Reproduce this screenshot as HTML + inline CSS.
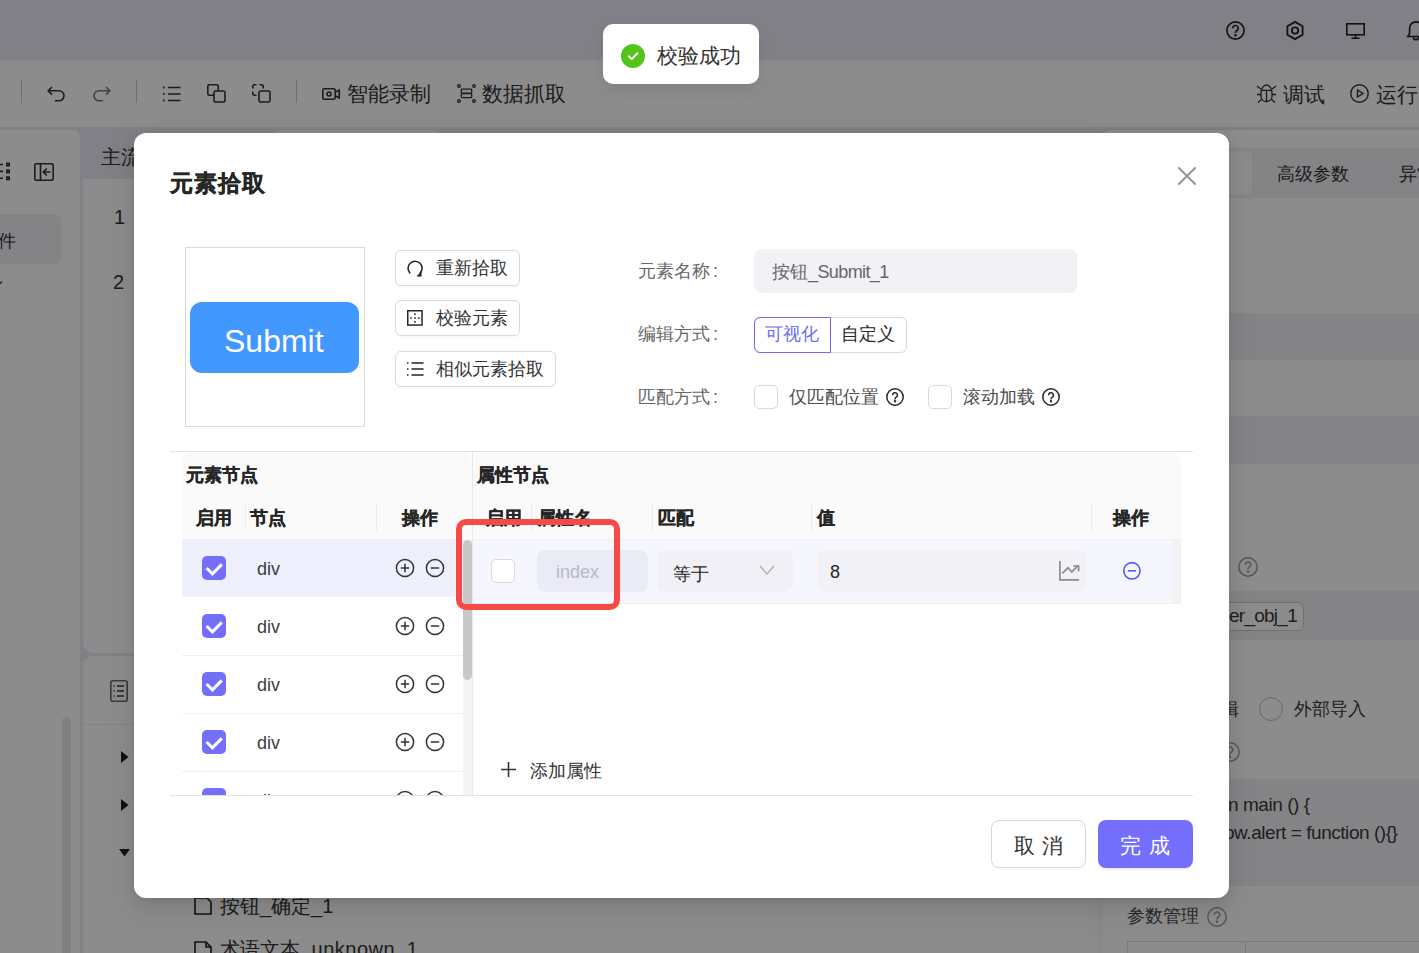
<!DOCTYPE html>
<html><head><meta charset="utf-8">
<style>
*{box-sizing:border-box;margin:0;padding:0}
html,body{width:1419px;height:953px;overflow:hidden}
body{position:relative;background:#eceaf4;font-family:"Liberation Sans",sans-serif;color:#333;}
.a{position:absolute}
.t{position:absolute;white-space:nowrap;line-height:1}
svg{position:absolute;overflow:visible}
</style></head><body>

<!-- ============ UNDERLYING APP ============ -->
<div class="a" id="app" style="left:0;top:0;width:1419px;height:953px">
  <!-- header icons -->
  <svg style="left:1226px;top:21px" width="19" height="19" viewBox="0 0 19 19" fill="none" stroke="#222" stroke-width="1.6"><circle cx="9.5" cy="9.5" r="8.6"/><path d="M6.8 7.3a2.7 2.7 0 1 1 3.8 2.4c-.8.4-1.1.9-1.1 1.7v.6"/><circle cx="9.5" cy="14.3" r=".5" fill="#222"/></svg>
  <svg style="left:1286px;top:21px" width="18" height="19" viewBox="0 0 18 19" fill="none" stroke="#222" stroke-width="1.8"><path d="M9 .9 16.6 5.2v8.6L9 18.1 1.4 13.8V5.2z"/><circle cx="9" cy="9.5" r="3.2"/></svg>
  <svg style="left:1346px;top:23px" width="19" height="16" viewBox="0 0 19 16" fill="none" stroke="#222" stroke-width="1.6"><rect x=".8" y=".8" width="17.4" height="11" /><path d="M9.5 12v3M5.5 15.2h8"/></svg>
  <svg style="left:1407px;top:20px" width="18" height="20" viewBox="0 0 18 20" fill="none" stroke="#222" stroke-width="1.7"><path d="M.9 16.5 2.6 13.6V8.2a6.4 6.4 0 0 1 12.8 0v5.4l1.7 2.9z"/><path d="M6.5 17.2a2.5 2.5 0 0 0 5 0"/></svg>

  <!-- toolbar -->
  <div class="a" style="left:0;top:60px;width:1419px;height:67px;background:#fff"></div>
  <div class="a" style="left:21px;top:80px;width:1px;height:23px;background:#c8c8c8"></div>
  <div class="a" style="left:136px;top:80px;width:1px;height:23px;background:#c8c8c8"></div>
  <div class="a" style="left:296px;top:80px;width:1px;height:23px;background:#c8c8c8"></div>
  <svg style="left:47px;top:86px" width="19" height="16" viewBox="0 0 19 16" fill="none" stroke="#333" stroke-width="1.6"><path d="M5 1 1.2 4.8 5 8.6"/><path d="M1.5 4.8h10.5a5 5 0 0 1 0 10H8"/></svg>
  <svg style="left:92px;top:86px" width="19" height="16" viewBox="0 0 19 16" fill="none" stroke="#777" stroke-width="1.6"><path d="M14 1l3.8 3.8L14 8.6"/><path d="M17.5 4.8H7a5 5 0 0 0 0 10h4"/></svg>
  <svg style="left:162px;top:86px" width="19" height="16" viewBox="0 0 19 16" fill="none" stroke="#333" stroke-width="1.6"><path d="M6 1.5h12.5M6 8h12.5M6 14.5h12.5"/><path d="M1 1.5h1.5M1 8h1.5M1 14.5h1.5" stroke-width="1.8"/></svg>
  <svg style="left:207px;top:84px" width="19" height="19" viewBox="0 0 19 19" fill="none" stroke="#333" stroke-width="1.6"><rect x=".8" y=".8" width="10.5" height="10.5" rx="1.5"/><rect x="7" y="7" width="11" height="11" rx="1.5" fill="#fff"/></svg>
  <svg style="left:252px;top:84px" width="19" height="19" viewBox="0 0 19 19" fill="none" stroke="#333" stroke-width="1.6"><path d="M.8 4.5V2.3A1.5 1.5 0 0 1 2.3.8h2.2M7.5.8h2.2a1.5 1.5 0 0 1 1.5 1.5v2.2M.8 7.5v2.2a1.5 1.5 0 0 0 1.5 1.5h2.2"/><rect x="7" y="7" width="11" height="11" rx="1.5"/></svg>
  <svg style="left:322px;top:88px" width="18" height="12" viewBox="0 0 18 12" fill="none" stroke="#333" stroke-width="1.6"><rect x=".8" y=".8" width="12.4" height="10.4" rx="1.5"/><circle cx="7" cy="6" r="2"/><path d="M13.2 4.2 17.2 2v8l-4-2.2"/></svg>
  <div class="t" style="left:347px;top:83px;font-size:21px;color:#333">智能录制</div>
  <svg style="left:457px;top:84px" width="19" height="19" viewBox="0 0 19 19" fill="none" stroke="#333" stroke-width="1.3"><rect x="4.3" y="5.2" width="10.4" height="4" rx=".8"/><rect x="4.3" y="9.6" width="10.4" height="4" rx=".8"/><circle cx="2" cy="2" r="1.3"/><circle cx="17" cy="2" r="1.3"/><circle cx="2" cy="17" r="1.3"/><circle cx="17" cy="17" r="1.3"/></svg>
  <div class="t" style="left:482px;top:83px;font-size:21px;color:#333">数据抓取</div>
  <svg style="left:1257px;top:84px" width="19" height="19" viewBox="0 0 19 19" fill="none" stroke="#333" stroke-width="1.3"><path d="M4 9C4 4.5 6.5 1 9.5 1S15 4.5 15 9v3.5c0 3-2.5 5-5.5 5S4 15.5 4 12.5z"/><path d="M4.3 6.3h10.4M9.5 6.3v11.2M0 2l3.8 3M19 2l-3.8 3M0 10.5h4M15 10.5h4M1 18.5l3.4-3M18 18.5l-3.4-3"/></svg>
  <div class="t" style="left:1283px;top:84px;font-size:21px;color:#333">调试</div>
  <svg style="left:1350px;top:84px" width="19" height="19" viewBox="0 0 19 19" fill="none" stroke="#333" stroke-width="1.4"><circle cx="9.5" cy="9.5" r="8.7"/><path d="M7.5 6v7l5.5-3.5z"/></svg>
  <div class="t" style="left:1376px;top:84px;font-size:21px;color:#333">运行</div>

  <!-- left sidebar -->
  <div class="a" style="left:-10px;top:130px;width:90px;height:840px;background:#fff;border-radius:0 8px 0 0"></div>
  <svg style="left:0;top:155px" width="12" height="30" viewBox="0 0 12 30" fill="none" stroke="#333" stroke-width="1.6"><path d="M-6 9.5h9M-6 16.4h9M-6 23.3h9"/><rect x="6.8" y="8.3" width="2.4" height="2.4"/><rect x="6.8" y="15.2" width="2.4" height="2.4"/><rect x="6.8" y="22.1" width="2.4" height="2.4"/></svg>
  <svg style="left:34px;top:163px" width="20" height="18" viewBox="0 0 20 18" fill="none" stroke="#333" stroke-width="1.6"><rect x=".8" y=".8" width="18.4" height="16.4" rx="1.5"/><path d="M6.5 1v16M16.5 9H9.5M12.8 5.5 9.3 9l3.5 3.5"/></svg>
  <div class="a" style="left:-10px;top:214px;width:72px;height:50px;background:#f1f0f6;border-radius:8px"></div>
  <div class="t" style="left:-2px;top:232px;font-size:18px;color:#333">件</div>
  <svg style="left:-7px;top:280px" width="10" height="8" viewBox="0 0 10 8" fill="none" stroke="#333" stroke-width="1.4"><path d="M1 1.5 5 5.5 9 1.5"/></svg>
  <div class="a" style="left:62px;top:717px;width:9px;height:260px;background:#e9e8ee;border-radius:5px"></div>

  <!-- main tabs + canvas -->
  <div class="a" style="left:273px;top:130px;width:168px;height:49px;background:#fff;border-radius:8px 8px 0 0"></div>
  <div class="t" style="left:101px;top:147px;font-size:20px;color:#333">主流程</div>
  <div class="a" style="left:83px;top:179px;width:1017px;height:474px;background:#fff;border-radius:0 0 10px 10px"></div>
  <div class="t" style="left:114px;top:207px;font-size:20px;color:#333">1</div>
  <div class="t" style="left:113px;top:272px;font-size:20px;color:#333">2</div>

  <!-- lower panel -->
  <div class="a" style="left:83px;top:656px;width:1030px;height:310px;background:#fff;border-radius:10px 10px 0 0"></div>
  <div class="a" style="left:83px;top:724px;width:1017px;height:1px;background:#eee"></div>
  <svg style="left:110px;top:680px" width="18" height="22" viewBox="0 0 18 22" fill="none" stroke="#6a6a6a" stroke-width="1.6"><rect x=".8" y=".8" width="16.4" height="20.4" rx="2"/><path d="M7 6h7M7 11h7M7 16h7" stroke-width="1.8"/><path d="M3.5 6h1.2M3.5 11h1.2M3.5 16h1.2" stroke-width="1.8"/></svg>
  <svg style="left:121px;top:751px" width="8" height="12" viewBox="0 0 8 12"><path d="M0 0 7.5 6 0 12z" fill="#222"/></svg>
  <svg style="left:121px;top:799px" width="8" height="12" viewBox="0 0 8 12"><path d="M0 0 7.5 6 0 12z" fill="#222"/></svg>
  <svg style="left:119px;top:849px" width="11" height="8" viewBox="0 0 11 8"><path d="M0 0h11L5.5 7.5z" fill="#222"/></svg>
  <svg style="left:194px;top:897px" width="18" height="18" viewBox="0 0 18 18" fill="none" stroke="#222" stroke-width="1.6"><path d="M1 1h12l4 4v12H1z"/></svg>
  <div class="t" style="left:220px;top:896px;font-size:20px;color:#333">按钮_确定_1</div>
  <svg style="left:194px;top:941px" width="18" height="18" viewBox="0 0 18 18" fill="none" stroke="#222" stroke-width="1.6"><path d="M1 1h11l5 5v12H1zM12 1v5h5"/></svg>
  <div class="t" style="left:220px;top:939px;font-size:20px;color:#333">术语文本<span style="letter-spacing:0.5px">_unknown_1</span></div>

  <!-- right panel -->
  <div class="a" style="left:1103px;top:130px;width:330px;height:830px;background:#fff;border-radius:8px 0 0 0;box-shadow:-4px 0 14px rgba(0,0,0,.05)"></div>
  <div class="a" style="left:1103px;top:148px;width:316px;height:50px;background:#f1f0f6"></div>
  <div class="a" style="left:1106px;top:151px;width:146px;height:44px;background:#fff;border-radius:6px"></div>
  <div class="t" style="left:1277px;top:165px;font-size:18px;color:#333">高级参数</div>
  <div class="t" style="left:1399px;top:165px;font-size:18px;color:#333">异常</div>
  <div class="a" style="left:1103px;top:313px;width:316px;height:47px;background:#f1f0f6"></div>
  <div class="a" style="left:1103px;top:416px;width:316px;height:48px;background:#f1f0f6"></div>
  <svg style="left:1238px;top:557px" width="20" height="20" viewBox="0 0 20 20" fill="none" stroke="#999" stroke-width="1.4"><circle cx="10" cy="10" r="9.2"/><path d="M7.3 7.8a2.7 2.7 0 1 1 3.8 2.4c-.8.4-1.1.9-1.1 1.7v.6"/><circle cx="10" cy="14.8" r=".5" fill="#999"/></svg>
  <div class="a" style="left:1103px;top:591px;width:316px;height:49px;background:#f1f0f6"></div>
  <div class="a" style="left:1180px;top:602px;width:124px;height:29px;background:#fff;border:1px solid #ccc;border-radius:6px"></div>
  <div class="t" style="left:1229px;top:606px;font-size:19px;color:#3a3a3a;letter-spacing:-0.75px">er_obj_1</div>
  <div class="t" style="left:1221px;top:700px;font-size:18px;color:#333">辑</div>
  <div class="a" style="left:1259px;top:697px;width:24px;height:24px;border:1px solid #bbb;border-radius:50%;background:#fff"></div>
  <div class="t" style="left:1294px;top:700px;font-size:18px;color:#3a3a3a">外部导入</div>
  <svg style="left:1220px;top:742px" width="20" height="20" viewBox="0 0 20 20" fill="none" stroke="#999" stroke-width="1.4"><circle cx="10" cy="10" r="9.2"/><path d="M7.3 7.8a2.7 2.7 0 1 1 3.8 2.4c-.8.4-1.1.9-1.1 1.7v.6"/><circle cx="10" cy="14.8" r=".5" fill="#999"/></svg>
  <div class="a" style="left:1103px;top:779px;width:316px;height:107px;background:#f1f0f6"></div>
  <div class="t" style="left:1228px;top:795px;font-size:19px;color:#3a3a3a;letter-spacing:-0.45px">n main () {</div>
  <div class="t" style="left:1224px;top:823px;font-size:19px;color:#3a3a3a;letter-spacing:-0.45px">ow.alert = function (){}</div>
  <div class="t" style="left:1127px;top:907px;font-size:18px;color:#4a4a4a">参数管理</div>
  <svg style="left:1207px;top:907px" width="20" height="20" viewBox="0 0 20 20" fill="none" stroke="#999" stroke-width="1.4"><circle cx="10" cy="10" r="9.2"/><path d="M7.3 7.8a2.7 2.7 0 1 1 3.8 2.4c-.8.4-1.1.9-1.1 1.7v.6"/><circle cx="10" cy="14.8" r=".5" fill="#999"/></svg>
  <div class="a" style="left:1127px;top:941px;width:300px;height:20px;border:1px solid #ddd"></div>
  <div class="a" style="left:1245px;top:941px;width:1px;height:20px;background:#ddd"></div>
</div>

<!-- ============ MASK ============ -->
<div class="a" style="left:0;top:0;width:1419px;height:953px;background:rgba(0,0,0,0.45)"></div>

<!-- ============ TOAST ============ -->
<div class="a" style="left:603px;top:24px;width:156px;height:60px;background:#fff;border-radius:10px;box-shadow:0 6px 16px rgba(0,0,0,.08)"></div>
<svg style="left:621px;top:44px" width="24" height="24" viewBox="0 0 24 24"><circle cx="12" cy="12" r="12" fill="#52c41a"/><path d="M7.8 12.2l3 2.9 5.6-5.8" fill="none" stroke="#fff" stroke-width="2" stroke-linecap="round" stroke-linejoin="round"/></svg>
<div class="t" style="left:657px;top:45px;font-size:21px;color:#333">校验成功</div>

<!-- ============ MODAL ============ -->
<div class="a" id="modal" style="left:134px;top:133px;width:1095px;height:765px;background:#fff;border-radius:12px;box-shadow:0 6px 16px rgba(0,0,0,.08),0 3px 6px -4px rgba(0,0,0,.12),0 9px 28px 8px rgba(0,0,0,.05)">
</div>
<!-- modal content -->
<div class="t" style="left:170px;top:172px;font-size:23px;letter-spacing:1px;font-weight:bold;color:#262626;-webkit-text-stroke:0.4px #262626">元素拾取</div>
<svg style="left:1178px;top:167px" width="18" height="18" viewBox="0 0 18 18" fill="none" stroke="#8c8c8c" stroke-width="1.9"><path d="M.3 .3l17.4 17.4M17.7 .3 .3 17.7"/></svg>

<!-- preview -->
<div class="a" style="left:185px;top:247px;width:180px;height:180px;border:1px solid #d9d9d9;background:#fff"></div>
<div class="a" style="left:190px;top:302px;width:169px;height:71px;background:#4298ff;border-radius:12px"></div>
<div class="t" style="left:224px;top:325px;font-size:32px;color:#fff">Submit</div>

<!-- buttons -->
<div class="a" style="left:395px;top:250px;width:125px;height:36px;border:1px solid #d9d9d9;border-radius:6px;box-shadow:0 2px 0 rgba(0,0,0,.02)"></div>
<svg style="left:406px;top:260px" width="17" height="17" viewBox="0 0 17 17" fill="none" stroke="#262626" stroke-width="1.6"><path d="M4.2 13.3A7 7 0 1 1 13.6 13.6"/><path d="M11 16.2h4.2v-4.2z" fill="#262626" stroke-width="0.6"/></svg>
<div class="t" style="left:436px;top:259px;font-size:18px;color:#333">重新拾取</div>
<div class="a" style="left:395px;top:300px;width:125px;height:36px;border:1px solid #d9d9d9;border-radius:6px;box-shadow:0 2px 0 rgba(0,0,0,.02)"></div>
<svg style="left:407px;top:310px" width="16" height="16" viewBox="0 0 16 16" fill="none" stroke="#262626" stroke-width="1.5"><rect x=".75" y=".75" width="14.3" height="14.3"/><g fill="#262626" stroke="none"><rect x="7.1" y="3.4" width="1.6" height="1.6"/><rect x="3.1" y="7.2" width="1.6" height="1.6"/><rect x="7.1" y="7.2" width="1.6" height="1.6"/><rect x="11.1" y="7.2" width="1.6" height="1.6"/><rect x="7.1" y="11" width="1.6" height="1.6"/></g></svg>
<div class="t" style="left:436px;top:309px;font-size:18px;color:#333">校验元素</div>
<div class="a" style="left:395px;top:351px;width:161px;height:36px;border:1px solid #d9d9d9;border-radius:6px;box-shadow:0 2px 0 rgba(0,0,0,.02)"></div>
<svg style="left:407px;top:362px" width="17" height="14" viewBox="0 0 17 14" fill="none" stroke="#262626" stroke-width="1.5"><path d="M4.5 1h12M4.5 7h12M4.5 13h12"/><path d="M0 1h1.5M0 7h1.5M0 13h1.5" stroke-width="1.6"/></svg>
<div class="t" style="left:436px;top:360px;font-size:18px;color:#333">相似元素拾取</div>

<!-- form -->
<div class="t" style="left:638px;top:262px;font-size:18px;color:#666">元素名称<span style="margin-left:3px">:</span></div>
<div class="a" style="left:754px;top:249px;width:323px;height:44px;background:#f2f1f6;border-radius:8px"></div>
<div class="t" style="left:772px;top:263px;font-size:18px;color:#666">按钮<span style="letter-spacing:-0.6px">_Submit_1</span></div>

<div class="t" style="left:638px;top:325px;font-size:18px;color:#666">编辑方式<span style="margin-left:3px">:</span></div>
<div class="a" style="left:754px;top:317px;width:153px;height:36px;border:1px solid #d9d9d9;border-radius:6px"></div>
<div class="a" style="left:754px;top:317px;width:77px;height:36px;border:1px solid #6e6cf5;border-radius:6px 0 0 6px"></div>
<div class="t" style="left:765px;top:325px;font-size:18px;color:#6e6cf5">可视化</div>
<div class="t" style="left:841px;top:325px;font-size:18px;color:#262626">自定义</div>

<div class="t" style="left:638px;top:388px;font-size:18px;color:#666">匹配方式<span style="margin-left:3px">:</span></div>
<div class="a" style="left:754px;top:385px;width:24px;height:24px;border:1px solid #d9d9d9;border-radius:5px"></div>
<div class="t" style="left:789px;top:388px;font-size:18px;color:#4a4a4a">仅匹配位置</div>
<svg style="left:886px;top:388px" width="18" height="18" viewBox="0 0 18 18" fill="none" stroke="#262626" stroke-width="1.5"><circle cx="9" cy="9" r="8.2"/><path d="M6.6 7.2a2.4 2.4 0 1 1 3.4 2.2c-.7.35-1 .8-1 1.5v.5"/><circle cx="9" cy="13.3" r=".45" fill="#262626"/></svg>
<div class="a" style="left:928px;top:385px;width:24px;height:24px;border:1px solid #d9d9d9;border-radius:5px"></div>
<div class="t" style="left:963px;top:388px;font-size:18px;color:#4a4a4a">滚动加载</div>
<svg style="left:1042px;top:388px" width="18" height="18" viewBox="0 0 18 18" fill="none" stroke="#262626" stroke-width="1.5"><circle cx="9" cy="9" r="8.2"/><path d="M6.6 7.2a2.4 2.4 0 1 1 3.4 2.2c-.7.35-1 .8-1 1.5v.5"/><circle cx="9" cy="13.3" r=".45" fill="#262626"/></svg>

<!-- divider -->
<div class="a" style="left:170px;top:451px;width:1023px;height:1px;background:#e3e3e3"></div>

<!-- left table -->
<div class="a" style="left:182px;top:452px;width:290px;height:343px;overflow:hidden">
  <div class="a" style="left:0;top:0;width:290px;height:87px;background:#fafafa;border-radius:12px 12px 0 0"></div>
  <div class="t" style="left:4px;top:14px;font-size:18px;font-weight:bold;color:#262626;-webkit-text-stroke:0.3px #262626">元素节点</div>
  <div class="t" style="left:14px;top:57px;font-size:18px;font-weight:bold;color:#262626;-webkit-text-stroke:0.3px #262626">启用</div>
  <div class="a" style="left:63px;top:51px;width:1px;height:28px;background:#ececec"></div>
  <div class="t" style="left:68px;top:57px;font-size:18px;font-weight:bold;color:#262626;-webkit-text-stroke:0.3px #262626">节点</div>
  <div class="a" style="left:194px;top:51px;width:1px;height:28px;background:#ececec"></div>
  <div class="t" style="left:220px;top:57px;font-size:18px;font-weight:bold;color:#262626;-webkit-text-stroke:0.3px #262626">操作</div>
  <div class="a" style="left:0;top:87px;width:281px;height:58px;background:#eef0fd"></div>
  <div class="a" style="left:0;top:203px;width:281px;height:1px;background:#f0f0f0"></div>
  <div class="a" style="left:0;top:261px;width:281px;height:1px;background:#f0f0f0"></div>
  <div class="a" style="left:0;top:319px;width:281px;height:1px;background:#f0f0f0"></div>
  <div class="a" style="left:281px;top:87px;width:9px;height:260px;background:#f4f4f4"></div>
  <div class="a" style="left:281px;top:88px;width:9px;height:140px;background:#c8c8c8;border-radius:4.5px"></div>
  <div class="a" style="left:20px;top:104px;width:24px;height:24px;background:#736ffa;border-radius:5px"></div>
  <svg style="left:20px;top:104px" width="24" height="24" viewBox="0 0 24 24" fill="none" stroke="#fff" stroke-width="3"><path d="M4.6 12 10.4 17.8 19.8 8.4"/></svg>
  <div class="t" style="left:75px;top:108px;font-size:18px;color:#3c3c3c">div</div>
  <svg style="left:213px;top:106px" width="20" height="20" viewBox="0 0 20 20" fill="none" stroke="#333" stroke-width="1.5"><circle cx="10" cy="10" r="8.6"/><path d="M10 5.8v8.4M5.8 10h8.4"/></svg>
  <svg style="left:243px;top:106px" width="20" height="20" viewBox="0 0 20 20" fill="none" stroke="#333" stroke-width="1.5"><circle cx="10" cy="10" r="8.6"/><path d="M5.8 10h8.4"/></svg>
  <div class="a" style="left:20px;top:162px;width:24px;height:24px;background:#736ffa;border-radius:5px"></div>
  <svg style="left:20px;top:162px" width="24" height="24" viewBox="0 0 24 24" fill="none" stroke="#fff" stroke-width="3"><path d="M4.6 12 10.4 17.8 19.8 8.4"/></svg>
  <div class="t" style="left:75px;top:166px;font-size:18px;color:#3c3c3c">div</div>
  <svg style="left:213px;top:164px" width="20" height="20" viewBox="0 0 20 20" fill="none" stroke="#333" stroke-width="1.5"><circle cx="10" cy="10" r="8.6"/><path d="M10 5.8v8.4M5.8 10h8.4"/></svg>
  <svg style="left:243px;top:164px" width="20" height="20" viewBox="0 0 20 20" fill="none" stroke="#333" stroke-width="1.5"><circle cx="10" cy="10" r="8.6"/><path d="M5.8 10h8.4"/></svg>
  <div class="a" style="left:20px;top:220px;width:24px;height:24px;background:#736ffa;border-radius:5px"></div>
  <svg style="left:20px;top:220px" width="24" height="24" viewBox="0 0 24 24" fill="none" stroke="#fff" stroke-width="3"><path d="M4.6 12 10.4 17.8 19.8 8.4"/></svg>
  <div class="t" style="left:75px;top:224px;font-size:18px;color:#3c3c3c">div</div>
  <svg style="left:213px;top:222px" width="20" height="20" viewBox="0 0 20 20" fill="none" stroke="#333" stroke-width="1.5"><circle cx="10" cy="10" r="8.6"/><path d="M10 5.8v8.4M5.8 10h8.4"/></svg>
  <svg style="left:243px;top:222px" width="20" height="20" viewBox="0 0 20 20" fill="none" stroke="#333" stroke-width="1.5"><circle cx="10" cy="10" r="8.6"/><path d="M5.8 10h8.4"/></svg>
  <div class="a" style="left:20px;top:278px;width:24px;height:24px;background:#736ffa;border-radius:5px"></div>
  <svg style="left:20px;top:278px" width="24" height="24" viewBox="0 0 24 24" fill="none" stroke="#fff" stroke-width="3"><path d="M4.6 12 10.4 17.8 19.8 8.4"/></svg>
  <div class="t" style="left:75px;top:282px;font-size:18px;color:#3c3c3c">div</div>
  <svg style="left:213px;top:280px" width="20" height="20" viewBox="0 0 20 20" fill="none" stroke="#333" stroke-width="1.5"><circle cx="10" cy="10" r="8.6"/><path d="M10 5.8v8.4M5.8 10h8.4"/></svg>
  <svg style="left:243px;top:280px" width="20" height="20" viewBox="0 0 20 20" fill="none" stroke="#333" stroke-width="1.5"><circle cx="10" cy="10" r="8.6"/><path d="M5.8 10h8.4"/></svg>
  <div class="a" style="left:20px;top:336px;width:24px;height:24px;background:#736ffa;border-radius:5px"></div>
  <svg style="left:20px;top:336px" width="24" height="24" viewBox="0 0 24 24" fill="none" stroke="#fff" stroke-width="3"><path d="M4.6 12 10.4 17.8 19.8 8.4"/></svg>
  <div class="t" style="left:75px;top:340px;font-size:18px;color:#3c3c3c">div</div>
  <svg style="left:213px;top:338px" width="20" height="20" viewBox="0 0 20 20" fill="none" stroke="#333" stroke-width="1.5"><circle cx="10" cy="10" r="8.6"/><path d="M10 5.8v8.4M5.8 10h8.4"/></svg>
  <svg style="left:243px;top:338px" width="20" height="20" viewBox="0 0 20 20" fill="none" stroke="#333" stroke-width="1.5"><circle cx="10" cy="10" r="8.6"/><path d="M5.8 10h8.4"/></svg>
</div>
<div class="a" style="left:472px;top:452px;width:1px;height:343px;background:#e8e8e8"></div>

<!-- right table -->
<div class="a" style="left:473px;top:452px;width:720px;height:343px;overflow:hidden">
  <div class="a" style="left:0;top:0;width:708px;height:87px;background:#fafafa;border-radius:12px 12px 0 0"></div>
  <div class="t" style="left:4px;top:14px;font-size:18px;font-weight:bold;color:#262626;-webkit-text-stroke:0.3px #262626">属性节点</div>
  <div class="t" style="left:13px;top:57px;font-size:18px;font-weight:bold;color:#262626;-webkit-text-stroke:0.3px #262626">启用</div>
  <div class="a" style="left:58px;top:51px;width:1px;height:28px;background:#ececec"></div>
  <div class="t" style="left:65px;top:57px;font-size:18px;font-weight:bold;color:#262626;-webkit-text-stroke:0.3px #262626">属性名</div>
  <div class="a" style="left:179px;top:51px;width:1px;height:28px;background:#ececec"></div>
  <div class="t" style="left:185px;top:57px;font-size:18px;font-weight:bold;color:#262626;-webkit-text-stroke:0.3px #262626">匹配</div>
  <div class="a" style="left:338px;top:51px;width:1px;height:28px;background:#ececec"></div>
  <div class="t" style="left:344px;top:57px;font-size:18px;font-weight:bold;color:#262626;-webkit-text-stroke:0.3px #262626">值</div>
  <div class="a" style="left:618px;top:51px;width:1px;height:28px;background:#ececec"></div>
  <div class="t" style="left:640px;top:57px;font-size:18px;font-weight:bold;color:#262626;-webkit-text-stroke:0.3px #262626">操作</div>
  <div class="a" style="left:0;top:87px;width:708px;height:1px;background:#f0f0f0"></div>
  <div class="a" style="left:0;top:88px;width:699px;height:64px;background:#f5f6fe"></div>
  <div class="a" style="left:699px;top:88px;width:9px;height:64px;background:#f3f3f3"></div>
  <div class="a" style="left:0;top:151px;width:708px;height:1px;background:#ececf2"></div>
  <div class="a" style="left:18px;top:107px;width:24px;height:24px;border:1px solid #d9d9d9;border-radius:5px;background:#fff"></div>
  <div class="a" style="left:64px;top:98px;width:111px;height:42px;background:#ebebf5;border-radius:8px"></div>
  <div class="t" style="left:83px;top:111px;font-size:18px;color:#b6b9c6">index</div>
  <div class="a" style="left:184px;top:98px;width:136px;height:42px;background:#f1f0f6;border-radius:8px"></div>
  <div class="t" style="left:200px;top:113px;font-size:18px;color:#262626">等于</div>
  <svg style="left:286px;top:113px" width="16" height="10" viewBox="0 0 16 10" fill="none" stroke="#b0b0b0" stroke-width="1.4"><path d="M1 1l7 8 7-8"/></svg>
  <div class="a" style="left:344px;top:98px;width:270px;height:42px;background:#f2f1f6;border-radius:9px"></div>
  <div class="t" style="left:357px;top:111px;font-size:18px;color:#262626">8</div>
  <svg style="left:586px;top:109px" width="21" height="21" viewBox="0 0 21 21" fill="none" stroke="#8c8c8c" stroke-width="1.7"><path d="M.9 0v18.9H20"/><path d="M3.3 12.4 9 6.8l3.8 4.2 6.2-6.3"/><path d="M14.3 5h5.3v5.3"/></svg>
  <svg style="left:650px;top:110px" width="19" height="19" viewBox="0 0 19 19" fill="none" stroke="#4d5cf2" stroke-width="1.6"><circle cx="8.9" cy="8.8" r="8.2"/><path d="M4.9 8.8h8"/></svg>
  <svg style="left:28px;top:310px" width="15" height="15" viewBox="0 0 15 15" fill="none" stroke="#333" stroke-width="1.6"><path d="M7.5 0v15M0 7.5h15"/></svg>
  <div class="t" style="left:57px;top:310px;font-size:18px;color:#333">添加属性</div>
</div>

<!-- red highlight -->
<div class="a" style="left:456px;top:519px;width:164px;height:91px;border:6px solid #f54a45;border-radius:10px"></div>

<!-- bottom divider -->
<div class="a" style="left:170px;top:795px;width:1023px;height:1px;background:#e3e3e3"></div>

<!-- footer buttons -->
<div class="a" style="left:991px;top:820px;width:95px;height:48px;border:1px solid #d9d9d9;border-radius:8px;background:#fff;box-shadow:0 2px 0 rgba(0,0,0,.02)"></div>
<div class="t" style="left:1014px;top:835px;font-size:21px;color:#333;letter-spacing:7px">取消</div>
<div class="a" style="left:1098px;top:820px;width:95px;height:48px;background:#736ffc;border-radius:8px;box-shadow:0 2px 0 rgba(115,111,252,.1)"></div>
<div class="t" style="left:1120px;top:835px;font-size:21px;color:#fff;letter-spacing:8px">完成</div>

</body></html>
